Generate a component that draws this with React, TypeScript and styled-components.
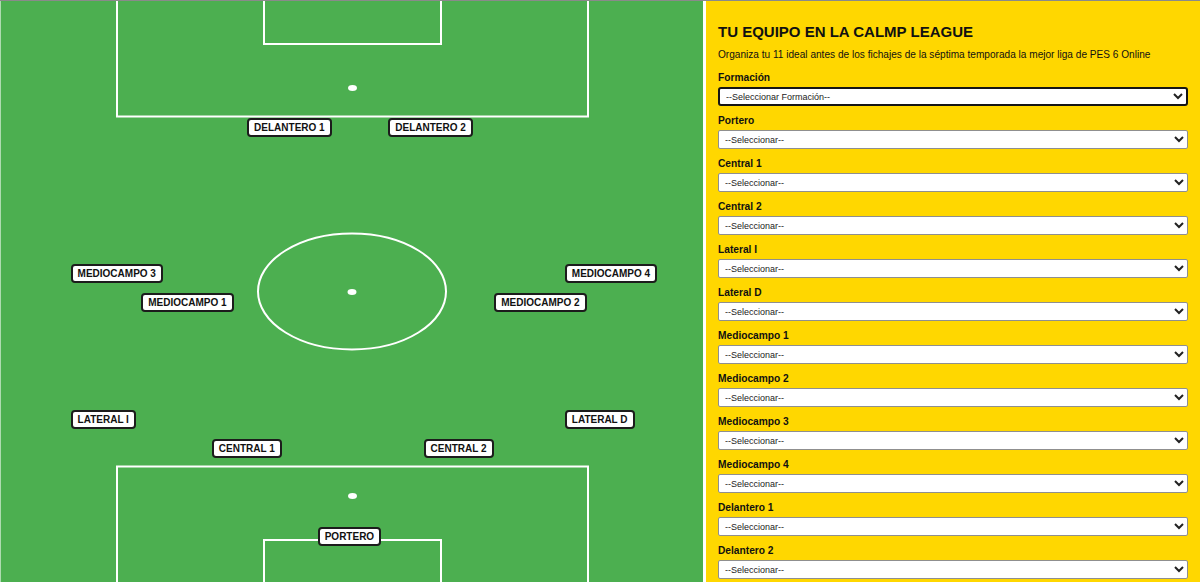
import React from "react";
import styled, { createGlobalStyle } from "styled-components";

const GlobalStyle = createGlobalStyle`
  html, body { margin: 0; padding: 0; overflow: hidden; }
  body { font-family: "Liberation Sans", Arial, sans-serif; }
  * { box-sizing: border-box; }
`;

const Page = styled.div`
  display: flex;
  width: 1200px;
  height: 582px;
  border-top: 1px solid #8a8a8a;
  overflow: hidden;
`;

const Pitch = styled.div`
  position: relative;
  flex: 0 0 706px;
  height: 584px;
  background: #4caf50;
  box-shadow: inset 1px 0 0 rgba(255, 255, 255, 0.55), inset -3px 0 0 #ffffff;
  overflow: hidden;
`;

const Markings = styled.svg`
  position: absolute;
  inset: 0;
  width: 706px;
  height: 584px;
`;

const PlayerTag = styled.div<{ $x: number; $y: number }>`
  position: absolute;
  left: ${(p) => p.$x}%;
  top: ${(p) => p.$y}%;
  padding: 2px 5px;
  background: #ffffff;
  border: 2px solid #1c1c1c;
  border-radius: 4px;
  font-size: 10px;
  line-height: 11px;
  font-weight: 700;
  color: #111111;
  white-space: nowrap;
`;

const Sidebar = styled.div`
  flex: 1;
  background: #ffd700;
  padding: 22px 12px 0 12px;
  display: flex;
  flex-direction: column;
`;

const Title = styled.h2`
  margin: 0 0 9px 0;
  font-size: 15px;
  line-height: 17px;
  font-weight: 700;
  color: #111111;
`;

const Intro = styled.p`
  margin: 0 0 11px 0;
  font-size: 10.1px;
  line-height: 12px;
  color: #111111;
`;

const Field = styled.div`
  display: flex;
  flex-direction: column;
  margin-bottom: 9px;
`;

const FieldLabel = styled.label`
  font-size: 10.2px;
  line-height: 12px;
  font-weight: 700;
  color: #111111;
  margin-bottom: 3px;
`;

const Picker = styled.select<{ $focused?: boolean }>`
  width: 100%;
  height: 19px;
  padding: 0 2px;
  font-family: "Liberation Sans", Arial, sans-serif;
  font-size: 9px;
  color: #222222;
  background: #ffffff;
  border: ${(p) => (p.$focused ? "2px solid #151515" : "1px solid #8f8f8f")};
  border-radius: ${(p) => (p.$focused ? "3px" : "2px")};
  outline: none;
`;

const players = [
  { name: "DELANTERO 1", x: 35, y: 20 },
  { name: "DELANTERO 2", x: 55, y: 20 },
  { name: "MEDIOCAMPO 3", x: 10, y: 45 },
  { name: "MEDIOCAMPO 4", x: 80, y: 45 },
  { name: "MEDIOCAMPO 1", x: 20, y: 50 },
  { name: "MEDIOCAMPO 2", x: 70, y: 50 },
  { name: "LATERAL I", x: 10, y: 70 },
  { name: "LATERAL D", x: 80, y: 70 },
  { name: "CENTRAL 1", x: 30, y: 75 },
  { name: "CENTRAL 2", x: 60, y: 75 },
  { name: "PORTERO", x: 45, y: 90 },
];

const fields = [
  "Portero",
  "Central 1",
  "Central 2",
  "Lateral I",
  "Lateral D",
  "Mediocampo 1",
  "Mediocampo 2",
  "Mediocampo 3",
  "Mediocampo 4",
  "Delantero 1",
  "Delantero 2",
];

export default function App() {
  return (
    <>
      <GlobalStyle />
      <Page>
        <Pitch>
          <Markings viewBox="0 0 706 584" fill="none" stroke="#ffffff" strokeWidth={2}>
            <rect x={117} y={-10} width={471} height={125.5} />
            <rect x={264} y={-10} width={177} height={53} />
            <ellipse cx={352.5} cy={87} rx={4.5} ry={3} fill="#ffffff" stroke="none" />
            <ellipse cx={352} cy={290.5} rx={94} ry={58} />
            <ellipse cx={352} cy={291} rx={4.5} ry={3} fill="#ffffff" stroke="none" />
            <rect x={117} y={465.5} width={471} height={140} />
            <rect x={264} y={539} width={177} height={60} />
            <ellipse cx={352.5} cy={495} rx={4.5} ry={3} fill="#ffffff" stroke="none" />
          </Markings>
          {players.map((p) => (
            <PlayerTag key={p.name} $x={p.x} $y={p.y}>
              {p.name}
            </PlayerTag>
          ))}
        </Pitch>
        <Sidebar>
          <Title>TU EQUIPO EN LA CALMP LEAGUE</Title>
          <Intro>
            Organiza tu 11 ideal antes de los fichajes de la séptima temporada la mejor liga de PES 6 Online
          </Intro>
          <Field>
            <FieldLabel>Formación</FieldLabel>
            <Picker $focused defaultValue="">
              <option value="">--Seleccionar Formación--</option>
            </Picker>
          </Field>
          {fields.map((f) => (
            <Field key={f}>
              <FieldLabel>{f}</FieldLabel>
              <Picker defaultValue="">
                <option value="">--Seleccionar--</option>
              </Picker>
            </Field>
          ))}
        </Sidebar>
      </Page>
    </>
  );
}
